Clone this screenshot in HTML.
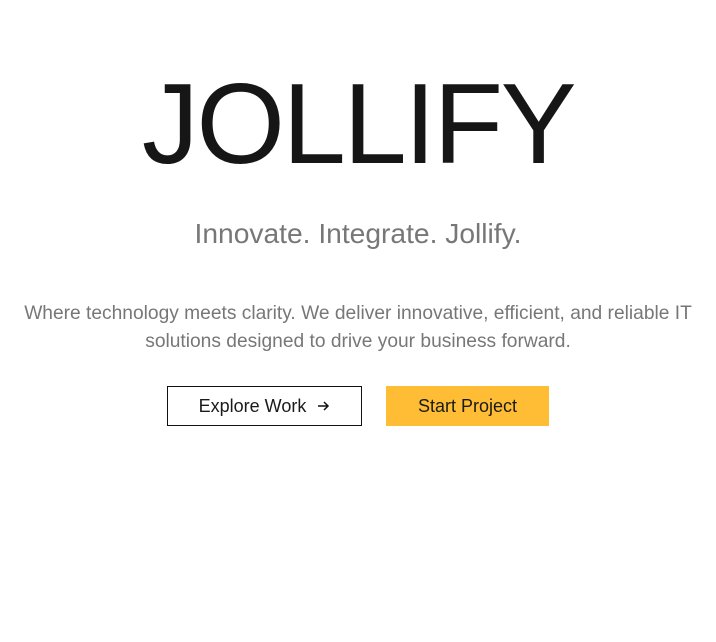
<!DOCTYPE html>
<html><head><style>
body{margin:0;width:716px;height:642px;background:#fff;font-family:"Liberation Sans",sans-serif;overflow:hidden}
h1{position:absolute;top:68px;left:0;width:716px;margin:0;text-align:center;font-weight:400;font-size:114px;line-height:114px;letter-spacing:-2.5px;color:#161616}
.tag{position:absolute;top:215px;left:0;width:716px;text-align:center;font-size:28.2px;line-height:36px;color:#777}
.p{position:absolute;top:300px;left:0;width:716px;text-align:center;font-size:19.2px;line-height:28px;color:#777}
.b{position:absolute;top:386px;height:40px;box-sizing:border-box;display:flex;align-items:center;justify-content:center;font-size:18px;color:#1a1a1a}
.b1{left:167px;width:195px;border:1px solid #111}
.b2{left:386px;width:163px;background:#FEBD34}
</style></head><body>
<h1>JOLLIFY</h1>
<div class="tag">Innovate. Integrate. Jollify.</div>
<div class="p">Where technology meets clarity. We deliver innovative, efficient, and reliable IT<br>solutions designed to drive your business forward.</div>
<div class="b b1">Explore Work<svg width="14" height="14" viewBox="0 0 14 14" style="margin-left:10px"><path d="M2 7H12M8 3L12 7L8 11" stroke="#111" stroke-width="1.5" fill="none"/></svg></div>
<div class="b b2">Start Project</div>
</body></html>
